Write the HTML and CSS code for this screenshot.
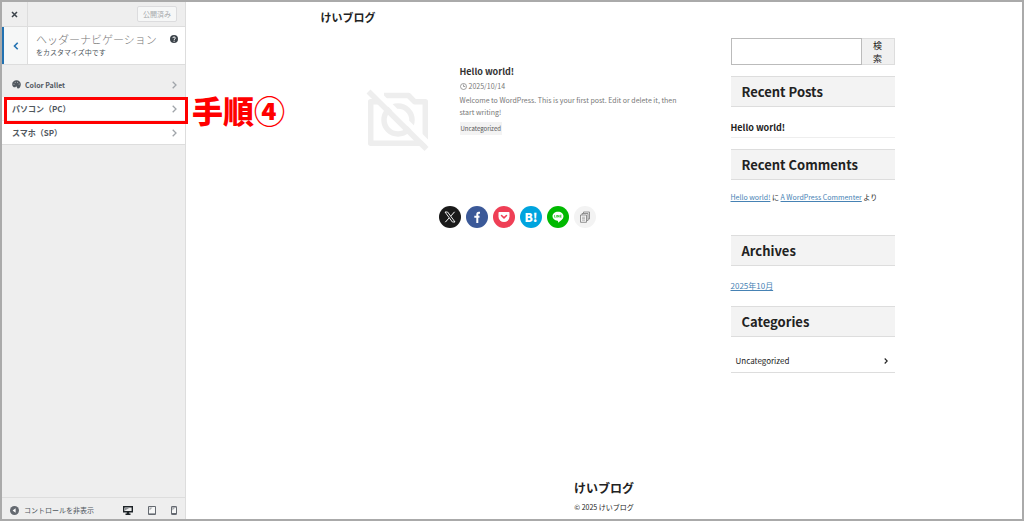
FILE: index.html
```html
<!DOCTYPE html>
<html lang="ja">
  <head>
    <meta charset="UTF-8">
    <meta name="viewport" content="width=device-width, initial-scale=1.0">
    <title>けいブログ</title>
    <link rel="stylesheet" href="styles.css">
  </head>
  <body>
    <div class="customizer">
      <!-- 左側のコントロール -->
      <div class="controls">
        <div class="controls-header">
          <button type="button" class="close" aria-label="閉じる">
            <svg width="7" height="7" viewBox="0 0 7 7"><path d="M1 1l5 5M6 1L1 6" stroke="#3c434a" stroke-width="1.5"/></svg>
          </button>
          <button type="button" class="publish" disabled>公開済み</button>
        </div>
        <div class="panel-title">
          <button type="button" class="back" aria-label="戻る">
            <svg width="6" height="8" viewBox="0 0 6 8"><path d="M4.7 .8L1.5 4l3.2 3.2" fill="none" stroke="#2271b1" stroke-width="1.6"/></svg>
          </button>
          <div class="panel-text">
            <h1>ヘッダーナビゲーション</h1>
            <p>をカスタマイズ中です</p>
          </div>
          <button type="button" class="help" aria-label="ヘルプ">
            <svg width="8" height="8" viewBox="0 0 8 8"><circle cx="4" cy="4" r="4" fill="#3c434a"/><path d="M2.8 3.1c0-1.6 2.5-1.6 2.5 0 0 .9-1.2.9-1.2 1.8" fill="none" stroke="#fff"/><circle cx="4.1" cy="6.2" r=".6" fill="#fff"/></svg>
          </button>
        </div>
        <ul class="sections">
          <li class="section-gray">
            <a href="#">
              <svg width="9" height="9" viewBox="0 0 9 9"><path d="M4.5.3C2 .3.2 2 .2 4.2c0 2.3 1.6 3.3 2.8 3.1.8-.1.7-.8 1.3-.8.9 0 .4 2.1 1.7 2.1C7.7 8.6 8.8 6.4 8.8 4.3 8.8 2 7 .3 4.5.3z" fill="#50575e"/><g fill="#ccc"><circle cx="2" cy="4.3" r=".5"/><circle cx="3.2" cy="2.3" r=".5"/><circle cx="5.6" cy="2.2" r=".5"/><circle cx="7.1" cy="4" r=".5"/></g></svg>
              <span>Color Pallet</span>
              <svg class="chevron" width="5" height="8" viewBox="0 0 5 8"><path d="M.7.7L4 4 .7 7.3" fill="none" stroke="#a0a5aa" stroke-width="1.3"/></svg>
            </a>
          </li>
          <li>
            <a href="#">
              <span>パソコン（PC）</span>
              <svg class="chevron" width="5" height="8" viewBox="0 0 5 8"><path d="M.7.7L4 4 .7 7.3" fill="none" stroke="#a0a5aa" stroke-width="1.3"/></svg>
            </a>
            <div class="step-frame"></div>
            <strong class="step-label">手順④</strong>
          </li>
          <li>
            <a href="#">
              <span>スマホ（SP）</span>
              <svg class="chevron" width="5" height="8" viewBox="0 0 5 8"><path d="M.7.7L4 4 .7 7.3" fill="none" stroke="#a0a5aa" stroke-width="1.3"/></svg>
            </a>
          </li>
        </ul>
        <div class="controls-footer">
          <button type="button" class="collapse">
            <svg width="9" height="9" viewBox="0 0 9 9"><circle cx="4.5" cy="4.5" r="4.5" fill="#646970"/><path d="M5.6 2.3v4.4L2.6 4.5z" fill="#fff"/></svg>
            コントロールを非表示
          </button>
          <div class="devices">
            <button type="button" aria-label="デスクトップ">
              <svg width="10" height="9" viewBox="0 0 10 9"><path d="M.7.7h8.6v5H.7z" fill="#eee" stroke="#1d2327" stroke-width="1.4"/><path d="M2 4.5l5-3H2z" fill="#8c8f94"/><path d="M3.8 6h2.4v1.6h1.3V9h-5V7.6h1.3z" fill="#1d2327"/></svg>
            </button>
            <button type="button" aria-label="タブレット">
              <svg width="8" height="9" viewBox="0 0 8 9"><path d="M.5.5h7v8h-7z" fill="#f6f7f7" stroke="#646970"/><path d="M1.5 4.5l3-3h-3z" fill="#a7aaad"/><path d="M1 7.5h6" stroke="#646970" stroke-width=".6"/></svg>
            </button>
            <button type="button" aria-label="スマートフォン">
              <svg width="6" height="9" viewBox="0 0 6 9"><rect x=".5" y=".5" width="5" height="8" rx=".6" fill="#f6f7f7" stroke="#646970"/><path d="M.5 7h5v1.5h-5zM.5.5h5v1h-5z" fill="#646970"/><path d="M1.3 4.5l2.5-2.5H1.3z" fill="#a7aaad"/></svg>
            </button>
          </div>
        </div>
      </div>

      <!-- プレビュー -->
      <div class="preview">
        <header class="site-header">
          <a href="#" class="site-name">けいブログ</a>
        </header>
        <div class="content">
          <main>
            <article class="post">
              <div class="thumb">
                <svg width="64" height="64" viewBox="0 0 64 64">
                  <g fill="none" stroke="#eee" stroke-width="5.5" stroke-linejoin="round">
                    <path d="M12 13.7H4.7v41.600h54.600V13.700H48.500L42.500 7.500H18"/>
                    <circle cx="32" cy="32" r="14"/>
                  </g>
                  <path d="M5-2l62 62" stroke="#fff" stroke-width="5"/>
                  <path d="M2.500 3.500l58 57.500" stroke="#eee" stroke-width="5.500"/>
                </svg>
              </div>
              <div class="post-body">
                <h2>Hello world!</h2>
                <div class="date">
                  <svg width="7" height="7" viewBox="0 0 7 7"><circle cx="3.5" cy="3.5" r="3" fill="none" stroke="#888" stroke-width=".8"/><path d="M3.5 1.5v2h1.800" fill="none" stroke="#888" stroke-width=".8"/></svg>
                  <time>2025/10/14</time>
                </div>
                <p>Welcome to WordPress. This is your first post. Edit or delete it, then start writing!</p>
                <a href="#" class="tag">Uncategorized</a>
              </div>
            </article>
            <div class="share">
              <a href="#" class="x" aria-label="X">
                <svg width="12" height="12" viewBox="0 0 12 12"><path d="M1 1h2.6l7.4 10H8.4z" fill="none" stroke="#fff" stroke-width=".9"/><path d="M10.6.8L6.7 5.2M5.2 6.9L1.3 11.2" stroke="#fff" stroke-width="1"/></svg>
              </a>
              <a href="#" class="facebook" aria-label="Facebook">
                <svg width="12" height="12" viewBox="0 0 12 12"><path d="M9 1.7H7.8c-1.1 0-1.5.5-1.5 1.5V12M3.3 5.800h5.200" fill="none" stroke="#fff" stroke-width="2"/></svg>
              </a>
              <a href="#" class="pocket" aria-label="Pocket">
                <svg width="12" height="12" viewBox="0 0 12 12"><path d="M1.5 1h9c.6 0 1 .4 1 1v3.5a5.5 5.5 0 0 1-11 0V2c0-.6.4-1 1-1z" fill="#fff"/><path d="M3.5 4.500L6 6.900l2.500-2.400" fill="none" stroke="#ef3f56" stroke-width="1.5" stroke-linecap="round" stroke-linejoin="round"/></svg>
              </a>
              <a href="#" class="hatena" aria-label="はてなブックマーク">B!</a>
              <a href="#" class="line" aria-label="LINE">
                <svg width="12" height="12" viewBox="0 0 12 12"><path d="M6 .7c3.1 0 5.5 2 5.5 4.5 0 2.7-2.7 4.6-5.5 6.5.2-.8.2-1.7-.5-1.9C2.7 9.5.5 7.6.5 5.2.5 2.7 2.9.7 6 .7z" fill="#fff"/><path d="M2.6 4v2.3h1M4.6 4v2.5M5.600 6.500V4l1.400 2.300V4M9.500 4.200H8.200v2h1.300M8.200 5.200h1.200" fill="none" stroke="#00b900" stroke-width=".6"/></svg>
              </a>
              <a href="#" class="copy" aria-label="コピー">
                <svg width="12" height="12" viewBox="0 0 12 12"><g fill="#f3f3f3" stroke="#888" stroke-width=".9"><path d="M4.5 1h6v7h-6z"/><path d="M3 2.5h6v7H3z"/><path d="M1.5 4h6v7.3h-6z"/></g><path d="M3 6.2h3M3 7.7h3M3 9.2h3" stroke="#888" stroke-width=".6"/></svg>
              </a>
            </div>
          </main>

          <aside>
            <form class="search">
              <input type="text" aria-label="検索">
              <button type="button">検索</button>
            </form>
            <section class="widget posts">
              <h2>Recent Posts</h2>
              <a href="#">Hello world!</a>
            </section>
            <section class="widget comments">
              <h2>Recent Comments</h2>
              <p><a href="#">Hello world!</a> に <a href="#">A WordPress Commenter</a> より</p>
            </section>
            <section class="widget archives">
              <h2>Archives</h2>
              <p><a href="#">2025年10月</a></p>
            </section>
            <section class="widget categories">
              <h2>Categories</h2>
              <a href="#">
                Uncategorized
                <svg width="4" height="6" viewBox="0 0 4 6"><path d="M.7.5L3.2 3 .7 5.5" fill="none" stroke="#222" stroke-width="1.1"/></svg>
              </a>
            </section>
          </aside>
        </div>
        <footer class="site-footer">
          <a href="#" class="site-name">けいブログ</a>
          <p>© 2025 けいブログ</p>
        </footer>
      </div>
    </div>
  </body>
</html>
```
FILE: styles.css
```css
* {
  margin: 0;
  padding: 0;
  box-sizing: border-box;
}

body {
  font-family: "Noto Sans CJK JP", sans-serif;
  font-size: 8px;
  line-height: 12px;
  color: #222;
  background-color: #fff;
}
a {
  color: inherit;
  text-decoration: none;
}
ul {
  list-style: none;
}
svg {
  display: block;
  flex-shrink: 0;
}
button {
  font-family: inherit;
  color: inherit;
  border: 0;
  background: none;
  cursor: pointer;
}
.customizer {
  display: flex;
  min-height: 100vh;
  border: 2px solid #aaa;
}

/* 左側のコントロール */
.controls {
  display: flex;
  flex-direction: column;
  flex: 0 0 184px;
  border-right: 1px solid #ddd;
  background-color: #eee;
  color: #50575e;
}
.controls-header {
  display: flex;
  align-items: center;
  justify-content: space-between;
  height: 25px;
  padding-right: 8px;
  border-bottom: 1px solid #ddd;
}
.close,
.back {
  display: flex;
  align-items: center;
  justify-content: center;
  align-self: stretch;
  width: 26px;
  border-right: 1px solid #ddd;
}
.publish {
  width: 40px;
  height: 16px;
  border: 1px solid #dcdcde;
  border-radius: 2px;
  background-color: #f6f7f7;
  color: #a7aaad;
  font-size: 7px;
  line-height: 14px;
}
.panel-title {
  display: flex;
  height: 38px;
  background-color: #fff;
  border-bottom: 1px solid #ddd;
}
.back {
  border-left: 2px solid #2271b1;
  background-color: #f6f7f7;
}
.panel-text {
  flex: 1;
  padding: 4px 0 0 8px;
}
.panel-text h1 {
  color: #777;
  font-size: 11px;
  font-weight: 200;
  line-height: 16px;
  white-space: nowrap;
}
.panel-text p {
  font-size: 7px;
  line-height: 10px;
}
.help {
  align-self: flex-start;
  padding: 8px 7px 0 0;
}
.sections {
  margin-top: 8px;
  border-bottom: 1px solid #ddd;
}
.sections li {
  position: relative;
  background-color: #fff;
}
.sections li + li {
  border-top: 1px solid #eee;
}
.sections .section-gray {
  background-color: #eee;
  font-size: 7px;
}
.sections a {
  display: flex;
  align-items: center;
  gap: 4px;
  height: 23px;
  padding: 0 8px 0 10px;
  font-weight: 700;
}
.chevron {
  margin-left: auto;
}
/* 手順の囲みと番号 */
.step-frame {
  position: absolute;
  top: 0;
  left: 2px;
  width: 184px;
  height: 27px;
  border: 3px solid #f00;
  z-index: 1;
}
.step-label {
  position: absolute;
  top: -7px;
  left: 190px;
  color: #f00;
  font-size: 31px;
  font-weight: 900;
  line-height: 40px;
  white-space: nowrap;
  z-index: 1;
}
.controls-footer {
  display: flex;
  align-items: center;
  justify-content: space-between;
  height: 22px;
  margin-top: auto;
  padding: 3px 8px 0;
  border-top: 1px solid #ddd;
}
.collapse {
  display: flex;
  align-items: center;
  gap: 5px;
  font-size: 7px;
}
.devices {
  display: flex;
  gap: 15px;
}

/* プレビュー */
.preview {
  display: flex;
  flex-direction: column;
  flex: 1;
}
.site-header,
.content {
  width: 100%;
  max-width: 581px;
  margin: 0 auto;
  padding-left: 7px;
}
.site-name {
  font-weight: 700;
}
.site-header {
  padding-top: 7px;
  font-size: 11px;
  line-height: 16px;
}
.content {
  display: flex;
  gap: 16px;
  padding-top: 13px;
}
main {
  flex: 1;
}
.post {
  display: flex;
  gap: 9px;
  padding: 27px 24px 0;
}
.thumb {
  display: flex;
  justify-content: center;
  flex: 0 0 106px;
  padding-top: 23px;
}
.post-body {
  flex: 1;
  color: #777;
}
.post-body h2 {
  color: #333;
  font-size: 9px;
  line-height: 14px;
}
.date {
  display: flex;
  align-items: center;
  gap: 2px;
  height: 14px;
  font-size: 7px;
}
.post-body p {
  margin-top: 1px;
  font-size: 7px;
}
.tag {
  display: inline-block;
  margin-top: 4px;
  padding: 0 1px;
  background-color: #f3f3f3;
  color: #555;
  font-size: 6px;
  line-height: 13px;
}
.share {
  display: flex;
  justify-content: center;
  gap: 5px;
  margin-top: 54px;
}
.share a {
  display: flex;
  align-items: center;
  justify-content: center;
  width: 22px;
  height: 22px;
  border-radius: 50%;
  color: #fff;
}
.share .x {
  background-color: #1a1a1a;
}
.share .facebook {
  background-color: #3b5998;
}
.share .pocket {
  background-color: #ef3f56;
}
.share .hatena {
  background-color: #00a4de;
  font-size: 12px;
  font-weight: 900;
}
.share .line {
  background-color: #00b900;
}
.share .copy {
  background-color: #f3f3f3;
}

/* サイドバー */
aside {
  flex: 0 0 164px;
  min-width: 0;
}
.search {
  display: flex;
  height: 27px;
}
.search input {
  flex: 1;
  width: 0;
  min-width: 0;
  border: 1px solid #bbb;
}
.search button {
  width: 33px;
  padding: 0 10px;
  border: 1px solid #ddd;
  border-left: 0;
  background-color: #f0f0f0;
  font-size: 9px;
  line-height: 13px;
}
.widget h2 {
  padding-left: 11px;
  border-top: 1px solid #ddd;
  border-bottom: 1px solid #ddd;
  background-color: #f3f3f3;
  font-size: 13px;
  line-height: 29px;
}
.widget p a {
  color: #4682b4;
  text-decoration: underline;
}
.widget p {
  margin-top: 11px;
  font-size: 7px;
}
.posts {
  margin-top: 11px;
}
.posts a {
  display: block;
  padding-top: 12px;
  border-bottom: 1px solid #eee;
  font-size: 9px;
  font-weight: 700;
  line-height: 18px;
}
.comments {
  margin-top: 11px;
}
.archives {
  margin-top: 32px;
}
.archives p {
  margin-top: 14px;
  font-size: 8px;
}
.categories {
  margin-top: 14px;
}
.categories a {
  display: flex;
  align-items: center;
  justify-content: space-between;
  margin-top: 12px;
  padding: 0 7px 0 5px;
  border-bottom: 1px solid #ddd;
  line-height: 23px;
}
.site-footer {
  margin-top: auto;
  padding-bottom: 6px;
  text-align: center;
  font-size: 12px;
  line-height: 18px;
}
.site-footer p {
  margin-top: 4px;
  font-size: 7px;
  line-height: 12px;
}
```
